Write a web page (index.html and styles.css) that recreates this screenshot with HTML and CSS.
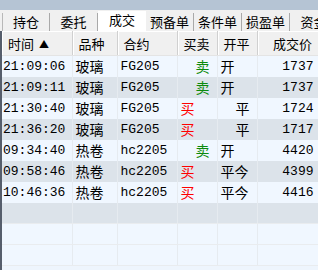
FILE: index.html
```
<!DOCTYPE html>
<html lang="zh">
<head>
  <meta charset="UTF-8">
  <title>成交</title>
  <link rel="stylesheet" href="styles.css">
</head>
<body>
  <div class="topbar"></div>
  <!-- 标签页 -->
  <div class="tabs">
    <span class="tab">持仓</span>
    <span class="tab">委托</span>
    <span class="tab active">成交</span>
    <span class="tab">预备单</span>
    <span class="tab">条件单</span>
    <span class="tab">损盈单</span>
    <span class="tab">资金</span>
  </div>
  <div class="panel">
    <table class="grid">
      <colgroup>
        <col class="c-time"><col class="c-kind"><col class="c-code"><col class="c-side"><col class="c-oc"><col class="c-price">
      </colgroup>
      <thead>
        <tr>
          <th class="left">时间 <span class="sort">▲</span></th>
          <th class="left">品种</th>
          <th class="left">合约</th>
          <th class="left">买卖</th>
          <th class="left">开平</th>
          <th class="right">成交价</th>
        </tr>
      </thead>
      <tbody>
        <tr>
          <td class="num">21:09:06</td><td>玻璃</td><td class="num">FG205</td>
          <td class="sell">卖</td><td>开</td><td class="num right">1737</td>
        </tr>
        <tr class="alt">
          <td class="num">21:09:11</td><td>玻璃</td><td class="num">FG205</td>
          <td class="sell">卖</td><td>开</td><td class="num right">1737</td>
        </tr>
        <tr>
          <td class="num">21:30:40</td><td>玻璃</td><td class="num">FG205</td>
          <td class="buy">买</td><td class="close">平</td><td class="num right">1724</td>
        </tr>
        <tr class="alt">
          <td class="num">21:36:20</td><td>玻璃</td><td class="num">FG205</td>
          <td class="buy">买</td><td class="close">平</td><td class="num right">1717</td>
        </tr>
        <tr>
          <td class="num">09:34:40</td><td>热卷</td><td class="num">hc2205</td>
          <td class="sell">卖</td><td>开</td><td class="num right">4420</td>
        </tr>
        <tr class="alt">
          <td class="num">09:58:46</td><td>热卷</td><td class="num">hc2205</td>
          <td class="buy">买</td><td>平今</td><td class="num right">4399</td>
        </tr>
        <tr>
          <td class="num">10:46:36</td><td>热卷</td><td class="num">hc2205</td>
          <td class="buy">买</td><td>平今</td><td class="num right">4416</td>
        </tr>
        <tr class="alt empty"><td></td><td></td><td></td><td></td><td></td><td></td></tr>
        <tr class="empty"><td></td><td></td><td></td><td></td><td></td><td></td></tr>
        <tr class="empty"><td></td><td></td><td></td><td></td><td></td><td></td></tr>
      </tbody>
    </table>
  </div>
</body>
</html>
```

FILE: styles.css
```
* {
  margin: 0;
  padding: 0;
  box-sizing: border-box;
}
body {
  width: 318px;
  height: 270px;
  overflow: hidden;
  background: #f0f0f0;
  font-family: "Noto Sans CJK SC", sans-serif;
  color: #000;
}
.topbar {
  height: 10px;
  background: #b5c4d4;
}
/* 标签页 */
.tabs {
  display: flex;
  height: 21px;
  padding-left: 2px;
  background: #f0f0f0;
  white-space: nowrap;
}
.tab {
  flex: none;
  width: 48px;
  height: 18px;
  margin-top: 3px;
  border-right: 1px solid #a9a9a9;
  font-size: 13px;
  line-height: 17px;
  text-align: center;
}
.tab:first-child {
  border-left: 1px solid #b8b8b8;
}
.tab.active {
  height: 20px;
  margin-top: 1px;
  background: #fff;
  border-right: none;
}
/* 表格 */
.panel {
  border-left: 2px solid #565e6c;
  height: 239px;
  background: #eef5fd;
}
.grid {
  border-collapse: collapse;
  table-layout: fixed;
  width: 316px;
}
.c-time { width: 70px; }
.c-kind { width: 45px; }
.c-code { width: 60px; }
.c-side { width: 40px; }
.c-oc { width: 40px; }
.c-price { width: 61px; }
th {
  height: 24px;
  background: #f0f0f0;
  border-top: 1px solid #fff;
  border-bottom: 1px solid #e4e4e4;
  border-right: 1px solid #d0d0d0;
  box-shadow: inset 1px 0 0 #fff;
  font-size: 13px;
  font-weight: normal;
  padding: 0 6px;
  white-space: nowrap;
}
th:last-child {
  border-right: none;
}
.left { text-align: left; }
.right { text-align: right; }
.sort {
  font-size: 10px;
  margin-left: 2px;
  vertical-align: 1px;
}
td {
  height: 21px;
  padding: 0 3px;
  border-right: 1px solid #e6ebf0;
  background: #f0f7ff;
  font-size: 14px;
  white-space: nowrap;
  overflow: hidden;
}
td:first-child {
  padding-left: 1px;
}
tr.alt td {
  background: #dce3ea;
}
tr.empty td {
  border-bottom: 1px solid #e9ecef;
}
.num {
  font-family: "Liberation Mono", monospace;
  font-size: 13px;
}
td.num.right {
  padding-right: 4px;
}
.sell {
  color: #0c8a0c;
  padding-left: 18px;
}
.buy {
  color: #f00;
}
.close {
  padding-left: 18px;
}
```
